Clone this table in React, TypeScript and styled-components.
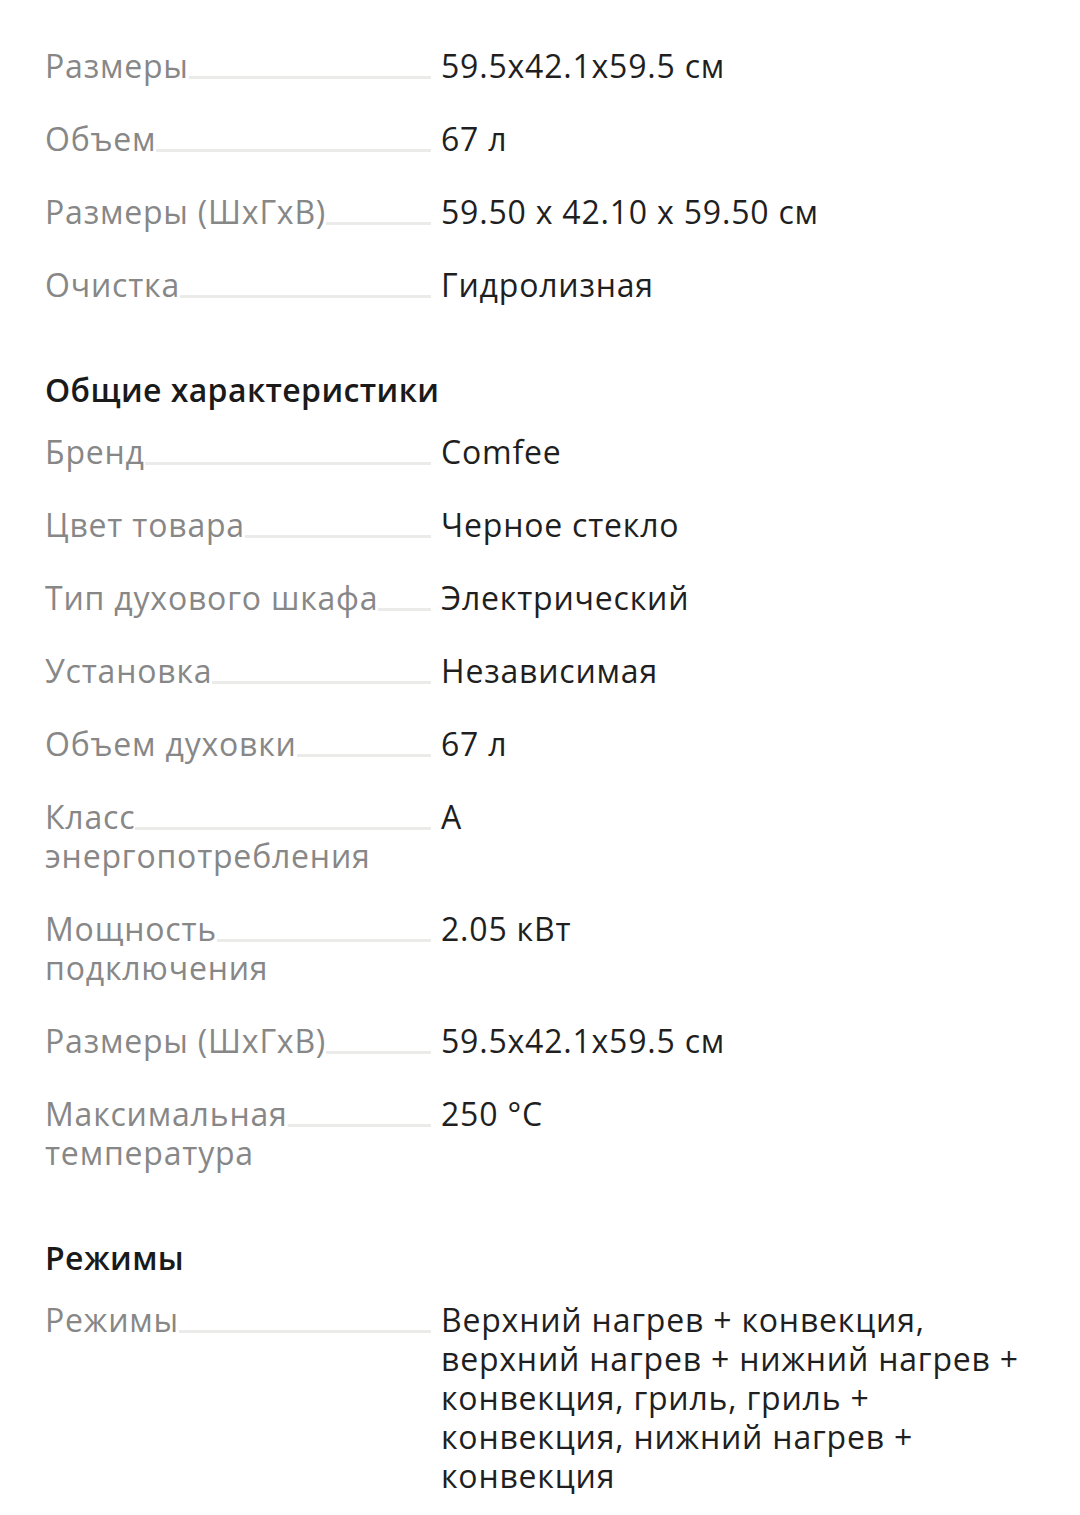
import { createGlobalStyle } from "styled-components";
import styled from "styled-components";

const GlobalStyle = createGlobalStyle`
  body {
    margin: 0;
    background: #ffffff;
    font-family: "Open Sans", "Noto Sans", sans-serif;
    -webkit-font-smoothing: antialiased;
  }
`;

const Page = styled.div`
  padding: 46px 60px 20px 45px;
  display: flex;
  flex-direction: column;
`;

const Section = styled.section`
  display: flex;
  flex-direction: column;
  gap: 34px;
  & + & {
    margin-top: 66px;
  }
`;

const Heading = styled.h2`
  margin: 0 0 -11px 0;
  font-size: 32px;
  line-height: 39px;
  font-weight: 600;
  letter-spacing: 0.4px;
  color: #1a1a1a;
`;

const Row = styled.div`
  display: grid;
  grid-template-columns: 386px 1fr;
  column-gap: 10px;
  font-size: 32px;
  line-height: 39px;
  letter-spacing: 0.8px;
`;

// leader line sits under the label; the white span background hides it behind the text
const Label = styled.div`
  color: #878787;
  background-image: linear-gradient(#ebebe9, #ebebe9);
  background-repeat: no-repeat;
  background-size: 100% 3px;
  background-position: 0 30px;
`;

const LabelText = styled.span`
  background: #ffffff;
`;

const Value = styled.div`
  color: #1f1f1f;
`;

type Spec = [string, string];

const sections: { title?: string; rows: Spec[] }[] = [
  {
    rows: [
      ["Размеры", "59.5x42.1x59.5 см"],
      ["Объем", "67 л"],
      ["Размеры (ШхГхВ)", "59.50 x 42.10 x 59.50 см"],
      ["Очистка", "Гидролизная"],
    ],
  },
  {
    title: "Общие характеристики",
    rows: [
      ["Бренд", "Comfee"],
      ["Цвет товара", "Черное стекло"],
      ["Тип духового шкафа", "Электрический"],
      ["Установка", "Независимая"],
      ["Объем духовки", "67 л"],
      ["Класс энергопотребления", "A"],
      ["Мощность подключения", "2.05 кВт"],
      ["Размеры (ШхГхВ)", "59.5x42.1x59.5 см"],
      ["Максимальная температура", "250 °C"],
    ],
  },
  {
    title: "Режимы",
    rows: [
      [
        "Режимы",
        "Верхний нагрев + конвекция, верхний нагрев + нижний нагрев + конвекция, гриль, гриль + конвекция, нижний нагрев + конвекция",
      ],
    ],
  },
];

export default function App() {
  return (
    <>
      <GlobalStyle />
      <Page>
        {sections.map((section, i) => (
          <Section key={i}>
            {section.title && <Heading>{section.title}</Heading>}
            {section.rows.map(([label, value], j) => (
              <Row key={j}>
                <Label>
                  <LabelText>{label}</LabelText>
                </Label>
                <Value>{value}</Value>
              </Row>
            ))}
          </Section>
        ))}
      </Page>
    </>
  );
}
